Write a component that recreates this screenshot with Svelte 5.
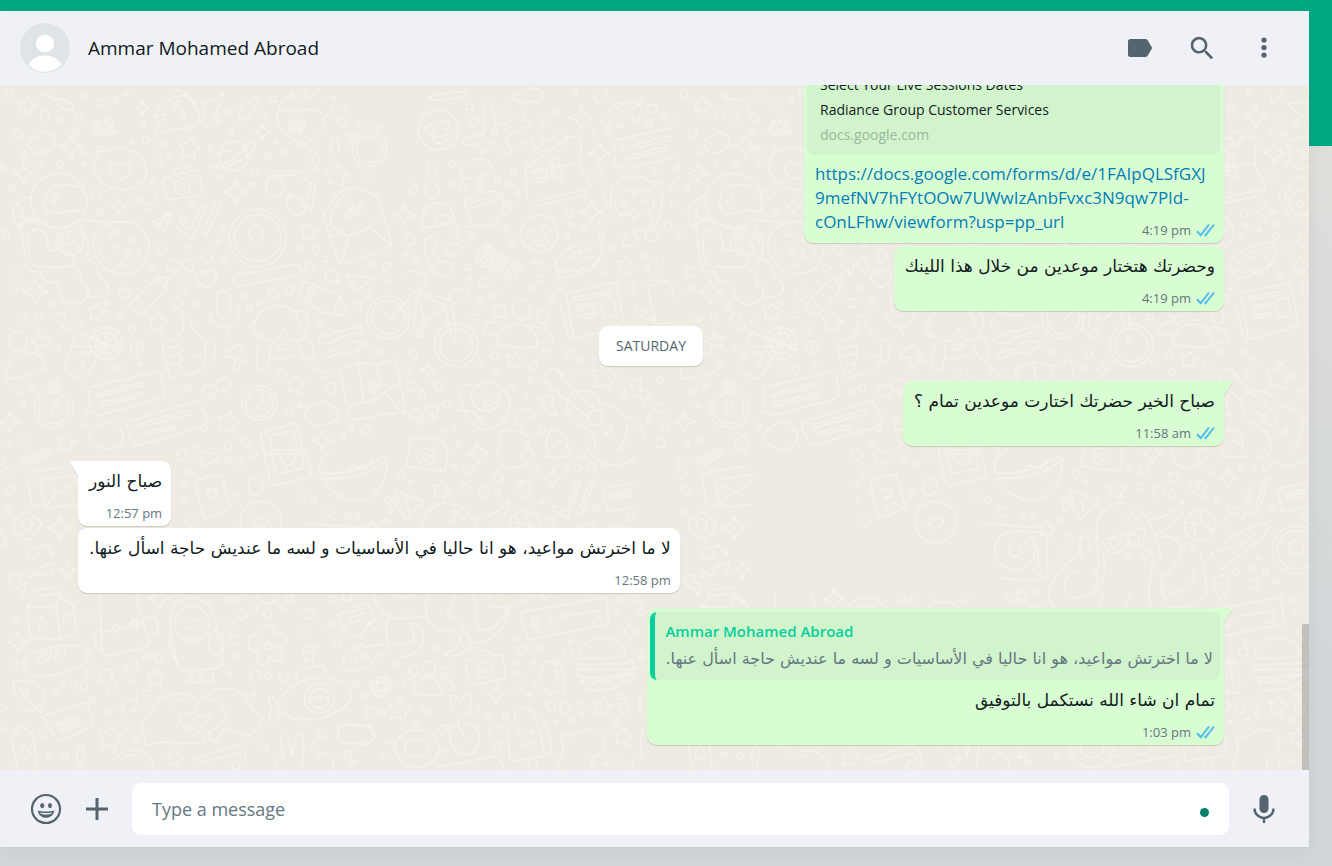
<script>
    let draft = $state('');

    const contact = 'Ammar Mohamed Abroad';
    const link = 'https://docs.google.com/forms/d/e/1FAIpQLSfGXJ9mefNV7hFYtOOw7UWwIzAnbFvxc3N9qw7PId-cOnLFhw/viewform?usp=pp_url';

    const messages = [
        { out: true, text: 'وحضرتك هتختار موعدين من خلال هذا اللينك', time: '4:19 pm' },
        { day: 'SATURDAY' },
        { out: true, tail: true, text: 'صباح الخير حضرتك اختارت موعدين تمام ؟', time: '11:58 am' },
        { tail: true, text: 'صباح النور', time: '12:57 pm' },
        { text: 'لا ما اخترتش مواعيد، هو انا حاليا في الأساسيات و لسه ما عنديش حاجة اسأل عنها.', time: '12:58 pm' },
        {
            out: true,
            tail: true,
            quote: 'لا ما اخترتش مواعيد، هو انا حاليا في الأساسيات و لسه ما عنديش حاجة اسأل عنها.',
            text: 'تمام ان شاء الله نستكمل بالتوفيق',
            time: '1:03 pm'
        }
    ];

    // wallpaper doodles, every group has its own origin inside the tile
    // dots, stars and sparks are flat lists of x, y, radius
    const doodles = [
        {
            x: 0, y: 15,
            dots: [27,12,11, 135,77,14, 257,17,8, 304,40,12, 239,84,12, 181,88,7, 230,123,8, 350,30,7, 378,10,7, 52,131,13, 72,190,7, 252,187,11, 124,220,6, 181,223,10, 250,223,6, 34,295,8, 8,230,7, 287,309,15, 301,367,8, 396,155,6, 437,149,10, 428,103,8, 484,163,7, 475,211,13, 511,199,8, 458,277,7, 467,319,7, 415,330,9, 448,351,10, 297,178,8, 576,341,7, 551,384,8, 633,174,8, 660,264,8, 686,67,10, 693,123,8, 655,95,7, 765,246,12, 756,286,8, 806,196,9, 856,189,7, 796,76,6, 822,27,8, 830,156,5, 1026,97,14, 1038,54,7, 1076,100,6, 1106,258,7, 487,477,15, 455,533,10, 565,468,7, 622,499,16, 668,415,7, 654,455,7, 674,517,7, 900,474,9, 949,481,10, 976,506,8, 930,533,15, 532,639,14, 590,638,7, 552,595,7, 376,611,18, 360,674,10, 320,637,7, 18,431,9, 46,546,14, 45,596,8, 157,645,7, 117,681,10, 69,688,8, 181,683,14, 198,712,10, 237,695,8, 176,776,8, 396,716,10, 328,836,11, 362,839,10, 736,618,8, 780,636,8, 750,655,8, 820,611,15, 866,600,13, 1101,615,8, 1073,652,13, 957,697,8, 1112,527,8, 1161,530,12, 1156,568,7, 845,852,12, 949,840,8, 976,855,10, 993,894,16, 866,964,12, 898,945,7, 527,906,7, 562,892,10, 55,903,9, 94,888,7, 69,946,7, 32,1060,9, 76,1050,11, 251,1007,7, 612,1014,8, 586,1067,7, 685,1068,11, 738,1058,12, 1098,1021,12, 1052,1018,8, 1029,1040,7, 1133,787,8, 185,440,6, 206,428,6, 232,438,6, 186,462,6, 232,468,6, 210,453,12, 210,453,42, 547,290,9, 547,290,23, 700,198,44, 768,430,22, 773,444,70, 773,444,86, 1108,178,40, 1108,178,52, 934,206,8, 1165,682,50, 1165,682,64, 318,760,32, 318,760,48, 412,773,19, 412,773,6, 778,938,40, 778,938,52, 162,955,46, 162,955,58, 162,889,18, 162,889,8, 1120,889,6, 244,787,6, 262,797,6, 249,820,6],
            stars: [80,48,28, 568,177,34, 1010,257,36, 924,427,26, 290,668,30, 472,698,32, 888,885,29, 684,998,37, 200,1060,28],
            sparks: [427,55,22, 213,170,36, 70,250,30, 356,349,24, 788,125,25, 706,306,36, 105,605,38, 30,995,30, 968,1052,30],
            paths: [
                'M135 12q14 14 32 14q52 6 52 24q0 18-28 6q-24-12-32-34zM105 186q-18-6-18-26q2-18 24-22q14-20 36-8q20 10 15 30q-4 14-16 20q-22 14-41 6z',
                'M362 174q14-2 20 10q18-4 26 10q18 0 20 18q14 8 8 24q10 14-2 26q2 18-16 20q-8 16-24 10q-12 12-28 4q-16 8-28-4q-18 4-24-14q-18-2-18-20q-20-8-10-28q-10-18 6-28q2-18 22-18q8-14 26-6q8-6 22-4zM362 270q-34-20-34-38q2-18 22-14l12 10q20-16 32 0q8 20-32 42z',
                'M496 262q-10 0-8 12l10 48q2 10 12 8l90-16q10-2 8-12l-10-50q-2-10-14-10zM520 250q0-12 12-14l26-4q10 0 12 8M574 256l12-2',
                'M644 230q-26 8-8-22q20-24 52-26M744 160q34-12 16 18q-50 56-116 58q6-14 24-16q48-12 76-60',
                'M176 250a85 82 0 1 0 2 0zM165 290q-32 14-32 50q4 34 46 30q30-12 76-6q8-2 6-30q-6-32-24-42q-40-14-72-2zM156 330q10-20 18-20q6 8-12 30q-8 4-6-10zM90 320q-40 4-52 50q0 30 22 46M90 338q-24 8-28 44l44 4M60 410q14-20 44-22q8 10 16 20M60 400l20 130q10 20 40 14M145 480q-4-62-34-62q-28 4-28 36l4 50q4 28 36 26l72 2q30 0 26-28q-6-18-12-22h-60M240 390q90 10 170 6M236 404q50 60 14 110M120 532q0 40 30 46h26q-4 50 32 66q50 0 58-40q-4-20-20-18q0-40-24-54M262 508q34 6 34 56q34 8 28 42q-16 20-56 14',
                'M370 394q50 0 74 50q14 60-34 98q-50 22-94-6q-46-40-34-92q24-50 88-50zM326 436q12-14 28-12q4 10-26 18zM342 480q10-16 16-4q-4 20-16 12zM376 498q4-22 14-20q2 24-12 24zM404 502q16-6 14-28M298 470q4 24 18 38M352 524q14-6 24 2q-12 8-24-2zM386 444q10-10 14 6q-8 14-14 4z',
                'M514 365l-58 32l16 6l20 22zM512 366l-40 38M530 414l46 32l44-96l-14-6l-34 74l-34-22zM600 420l22 14l42-96l-14-4l-36 74',
                'M465 136q10-40 36-64q-20 4-38 10q18-40 60-58q36-20 58 10q18 34 20 60l-42 24q-60-4-94 18zM520 58q0-26 18-28l-8 22q22-6 16 18q20 0 4 20M560 20q30 20 44 70M520 0q50 0 80 76M610 42l62-30q-20 60-50 98q-10 0-8-12zM720 94q-16-22 12-50l42-26q14 12-18 48q-16 26-36 28z',
                'M908 166q-84-50-78-86q16-36 60-12q10-14 40-8q40-4 42 30q-6 40-64 76zM830 90q0-50 50-84q-2 20 6 22l30-28q0 20 10 24l30-24M970 90q34-30 34-70l-24 2',
                'M990 188q-14 6-4-10q6 0 8 4v-36l16-12l10 42q-8 12-8 0q4-6 8 0M944 240q-30-24-32-40q4-18 24-16q22 4 22 24zM1050 150q-14-18 8-20q12 8-8 20zM1120 120q-6-14 10-12q20 4 10 16z',
                'M806 254q16-14 64-10q50-4 52 20q-10 14-24-8l-76 0M800 280q-10 28 20 40q28-2 30-30q-4-34-34-28q-14 4-16 18zM850 290l26 24q-24 10-14 40q20 34 46 16q16-20 0-40q-24-20-40-6M908 340l28 20l10-78q-12-10-14 4l-8 46',
                'M970 378q0-10 24-40q20-40 60-46q16-6 40 8q50 20 48 40l32 118q0 12-16 18l-130 44q-10 2-14-8zM1110 410l-62 28l-54-26q-10-12 10-60q20-42 62-60M986 436h62l-24 80M1110 412l60 50M1142 360q10 0-34 52M1032 382l24-36q6 10-14 36zM1056 376l30-40q8 8-18 42z',
                'M520 510q-24 4-16 26q10 10 20 6q-6 14 4 10q20-36-8-42zM562 506q-20 6-14 24q8 10 18 6q-2 14 6 12q20-36-10-42zM620 594q-40-20-30-42q18-16 28 0q10-20 30-4q8 20-28 46zM710 556l174-32q22 2 20 22q-6 12-20 12l-168 32q-18 0-18-16q2-12 12-18zM725 572h1M749 570h1M774 566h1M800 562h1',
                'M392 640l76-74l36-6l-6 36l-66 76q-8 8-18 0l-20-20q-6-6-2-12zM404 626q26 10 34 36M468 566q24 6 28 32M650 616q4-12 20-12q18 4 20 18v40q0 20-20 20q-16 0-20-16zM630 668q6 40 44 42q36-4 42-34v-20M674 710l14 34M920 576l90 38l36 54q-6 8-14 8l-60-8l-70-40q-6-6 0-20q2-30 18-32zM940 584q-14 10-20 44M950 590q-14 10-20 44M1024 620q-22 20-20 54',
                'M974 556q4-20 24-16q20 6 18 34q-14 14-6-2q-10 4-18 4q-18-8-18-20zM1042 556q40 0 74 10l-50 40q-6-20-26-50zM54 724q26 4 26 34q-8 26-26 28q-26-10-26-40q4-20 26-22zM16 866q0-50 36-68l12 10q6-20 30-20q40 10 44 46q-20 20-120 34zM118 724l6 20l28-6l-20 18l14 18l-24-10l-12 20l-2-22l-16-8l20-10z',
                'M230 726l86 38l-64 104q-8 4-52-22q-8-4-4-14zM216 770h100l60-8M318 712l0 96M276 740l84 40M284 790l68-60M412 792l8 32M410 828l26-6',
                'M490 770q-4-20 22-18q50-20 34-68q14-16 24 4q6 40 46 64v60q-10 44-74 42q-40 20-34-14q-20-14-8-28q-14-14-10-42zM500 774q50-10 46 4q6 14-36 18M500 800q50-12 46 4q0 18-38 20M508 826q40-8 34 6q-4 14-26 16M578 802l28-6M618 752q28-10 26 30q0 40-24 40',
                'M672 800q20-30 46-34l28 46q-10 8-18-6l-22 44l-10-4l14-44zM760 716q14-70 70-70q60 0 70 60l20 30q-20 20-40 14q-20 0-30-36q-10 36-30 40q-50-10-60-38zM762 690q-30 30 14 54M880 664q60-10 40 60M780 760q-20 60 0 82q30 10 30-70M890 756q20 60 44 56q24-16-18-82M812 800q30 16 70-6M832 766q20 0 36-4q-10 20-28 20z',
                'M956 744q10-10 34-6q12-24 34-12l56-18q20 14-10 20l-50 14q-20 20-46 16q-24 4-18-14zM966 792l62-18q30-34 50-16q20-10 24 0q-4 14-22 14q-20 30-50 14l-50 18q-16 0-14-12zM1020 840l54-24l60 10l54-18l30 160l-66 4l-50 12l-54 4zM1076 820l14 110M1130 830l14 60M1044 950l80-20l70-50M1162 916l50 60M1120 912q-26-30 0-38q26 8 0 38zM1168 690l30-34',
                'M264 892l206-46q10 0 14 10l8 56q0 12-10 14l-184 50q-10 4-20-10l-22 2l14-30zM290 914l134-38q12 0 6 10l-132 34q-14 2-8-6zM300 938l122-28q10 0 6 8l-118 30q-14 0-10-10zM384 996l204-64q10 0 12 14l26 40l-24 26l-186 54q-12 0-16-10q-26-50-16-60zM418 1002l146-40q10 4 4 12l-140 36q-14 0-10-8zM430 1028l90-22q10 4 0 10l-84 20q-10 0-6-8z',
                'M630 886q-24-4-22 22q14 20 26 6q-8 20 4 16q24-40-8-44zM670 866q-24 0-22 24q14 20 26 6q-8 16 2 16q34-40-6-46zM778 900q14 20 8 36q-20 20-20 26M176 930l-6 30l-18 14l6-30zM280 1060q-30-30 14-50q40-30 58 4q30 20 6 50q-30 30-78-4zM916 990q-10-40 34-46q24-24 40 2q40 20 14 50q-60 20-88-6zM782 1030l94-30q14-4 16 10l20 80h-120zM808 1040l70-20l16 60h-76z'
            ],
            words: [[280, 140, '42', 62, -10], [862, 128, 'W', 56, 4]]
        },
        {
            x: 1200, y: 15,
            dots: [209,50,9, 220,96,14, 317,65,11, 249,186,7, 157,222,10, 155,284,7, 187,290,10, 294,270,8, 341,244,8, 332,284,6, 352,313,8, 433,94,8, 470,65,10, 243,137,8, 283,124,8, 320,113,8, 619,92,14, 584,128,8, 626,130,8, 662,105,8, 757,56,14, 747,98,9, 790,81,8, 829,73,7, 523,8,8, 597,260,12, 507,371,12, 514,406,7, 552,418,6, 601,405,7, 604,440,9, 500,440,7, 336,455,7, 320,415,9, 167,425,9, 208,418,9, 215,445,7, 30,448,16, 18,493,7, 43,515,7, 206,531,9, 208,564,7, 251,577,14, 283,614,7, 240,635,10, 225,682,10, 401,514,7, 425,528,9, 421,568,12, 393,594,7, 474,592,9, 456,625,10, 640,475,7, 612,551,7, 735,500,8, 780,512,12, 741,538,8, 824,287,10, 825,340,12, 761,245,8, 804,409,11, 692,594,12, 115,120,60, 418,430,56, 674,344,9, 736,330,9, 169,765,50, 169,765,65, 40,792,11, 25,836,7, 35,889,14, 117,889,14, 67,911,9, 141,943,11, 129,1019,8, 161,1011,7, 178,1063,8, 235,815,8, 290,845,10, 283,796,12, 399,827,12, 393,872,8, 335,888,7, 376,917,8, 427,1020,9, 522,855,10, 435,787,8, 508,790,9, 539,812,7, 587,983,22, 672,912,9, 780,868,9, 780,955,14, 749,987,8, 794,1010,11, 782,1060,14, 267,495,10, 265,466,7, 65,716,8],
            stars: [907,48,28, 675,528,28, 343,811,26, 613,862,44],
            sparks: [543,82,36, 599,190,32, 574,365,34, 14,375,32, 83,840,22],
            paths: [
                'M75 112q20-16 30 0q-2 20-18 18q-16-6-12-18zM120 98q20-12 30 2q2 16-16 20q-16-6-14-22zM98 140q26 4 46-8q0 30-24 28q-14 0-22-20zM196 142l56-10l-2-80q10-40 26-10l10 66l60-20q10-20 30-24l-8 28q40-4 10 16l-62 34l18 44q-4 20-20 8l-40-40l-70 12q-30 0-8-24z',
                'M353 178q0-14 40-24M425 152l44-8M502 142q40-6 42 6l-4 78l30 60q0 14-16 14l-160 36q-14-6-14-30l-4-70zM374 248l164-30M394 350l162-34v-20M396 142q20-12 26 2l6 20q-8 16-24 8zM470 132q20-14 28 0l4 22q-10 14-28 6zM184 250q-10-22 24-24q20-30 50-14q24 8 16 36q-50 24-84 14z',
                'M194 346q50-20 110-34l8 28q-4 50-40 66q-46 8-58-10zM194 346q-4-20 30-30q60-20 80-4M206 356q40-4 98-36M312 334q20-4 26 8q-4 30-34 30M306 354q8-10 18-6M85 212q30 20 22 36q-20 8-24-8zM38 278q-26 36 2 36q24-8-2-36zM240 272q-20 24 0 30q20-8 0-30zM96 278q26 6 20 34q-18 20-36 6q-10-34 16-40zM68 412q-10-60 40-74q50 0 58 56q-40 20-98 18zM128 404q-24-12-20-22q12-14 20-4q20-10 24 6q-4 14-24 20z',
                'M76 450q14-20 32-6q8 24-8 34q6 30 24 36q30 0 36 26q-20 30-52 8q-44-40-32-98zM158 500q-26-16-24-30q12-20 22-4q24-10 30 6q-2 12-28 28zM378 424q16-14 26 0q0 16-14 18q-14-2-12-18zM422 410q20-10 30 4q0 14-16 20q-14-6-14-24zM402 450q20 6 44-4q-4 24-20 24q-14 0-24-20z',
                'M466 520q20-50 120-64q30 16 16 44q-20 50-110 64q-26-10-26-44zM470 530q10 24 20 12l18 10l12-14l20 10l8-14l24 4l12-20l20-24M514 494q30-16 30-4q-12 24-30 14zM560 478l16-4M564 500l14 4M486 514l8 6',
                'M650 390q-30-50-10-100q30-40 80-30q60 16 66 80q0 50-34 80M634 290q-40 16-6 66M748 274q50-10 40 54M700 360q-20 20-36 18q-30-30-16-54q30-40 52-10q20-24 44-6q36 30 6 60M656 378q30-20 50 4l30-24q30 20 14 50q-20 20-50 10M680 426q-20 30-2 42q30 4 36-20q0-20-20-24M744 412q-20 30 4 42q30 0 28-22q-8-14-20-18M686 366l14 20M704 358l14 18',
                'M638 40l90-4q-4 30-14 58q-20 0-76-54zM706 92l-16-26q10-12 30-24M640 152l180-40q10 0 14 10l14 66q0 10-8 12l-164 36q-14 2-20-10l-20-4l12-30l-10-24zM670 174l136-36q12 4 4 12l-132 32q-12 2-8-8zM680 198l120-28q10 4 4 10l-118 28q-12 0-6-10z',
                'M334 24q8-14 30-18q40-20 66-2q8 24-26 30q-40 10-70-10zM590 44l36-34l-12-8M590 40l-6-30M82 24q60-20 100-20q24 4 10 12q-60 24-110 8z',
                'M18 556q20-30 64 8q-10 40-40 40l-40 50M56 610l16 88l66-50zM60 606l90 26q-6-30 10-32h40q14 10 0 24l-44 20l14 100q-10 30-14 0l-26-110M50 620l-8 90q30 20 24 34l-24-8M2 660q30 16 20 60',
                'M298 644q24 4 16 32q-16 14-30 2q-10-28 14-34zM364 630q30 4 26 36q-10 30-30 24q-30-10-20-40q6-20 24-20zM428 660q24 4 18 30q-10 18-26 8q-20-30 8-38zM250 730q0-40 50-34l12 10M292 760q10-60 70-58q50 10 50 68q-60 8-120-10zM404 710q50 0 56 46l-42 0M250 730l42 6',
                'M498 610l140-32q10 0 12 8l20 110l-30 22l-120 30zM498 616l24 130l-12 6l-28-100q0-10 14-10M520 622l112-20q6 6 0 10l-106 20zM532 650l50-10q6 6 0 10l-46 10zM534 678l54-10q4 6 0 10l-48 8zM600 632q34-14 40-6l10 50l-38 8zM742 590l62-18l44 110q-20 20-80 20zM742 590l26 100q-50 0-64-42q20 10 40 16M806 580q40-10 40 20q6 30-10 40M760 570l40 0',
                'M178 900q20-24 60-14q20-14 40-8q60 30 50 80q-20 60-80 62q-60-20-70-120zM232 886q-30 30-10 60q20 20 56 16q30-20 20-60M172 962q60-10 76 50M252 942q-4-30 46-36q4 40-46 42zM250 944l40-30M50 960q-24 0-18 20q10 14 24 4q-10 24 2 20q24-40-8-44zM94 946q-24 0-18 20q10 14 24 4q-10 24 2 20q24-40-8-44zM342 980q10-30 50-20q20 10 10 24q-30 0-34 28q-20 0-26-32z',
                'M418 924l44-8l-8 24l18 40l-46-26l12-12zM694 876l30-8l-4 34l28 2l-14 48l-10-34l-26-4zM430 862q16-30 36-26l24 30l96 96M430 862l20 28l112 90M468 838l20 16M432 880l24-8M500 950q0-50 50-48q40 0 50 40q70 10 80 50q10 60-30 88M500 950q6 40 50 60q40 20 36 70M614 1034l20-26q10 6-10 26zM680 980q50 20 50 60M300 1024q60-10 88 20l-6 30M300 1024l6 56M440 1080q-6-60 30-60q40 10 32 60M26 1056q30-20 64-8l40 4l8 30M226 1060l20 20'
            ],
            words: [[388, 282, '24', 94, -10], [218, 510, 'BFF', 82, 32]]
        },
        {
            x: 0, y: 1095,
            dots: [22,67,14, 32,120,12, 24,184,8, 6,35,10, 546,14,17, 568,70,8, 550,106,8, 551,150,8, 573,213,15, 708,131,8, 686,28,9, 720,42,10, 762,15,8, 905,140,12, 939,152,10, 985,184,15, 1046,199,8, 1072,199,8, 81,224,16, 98,310,16, 90,373,8, 47,507,8, 40,641,11, 8,775,10, 8,828,10, 128,856,11, 147,915,8, 194,920,10, 264,501,9, 265,672,11, 187,700,7, 219,707,10, 253,707,11, 170,730,8, 278,750,8, 375,655,8, 407,646,8, 439,621,8, 476,625,12, 391,687,9, 440,730,10, 320,786,8, 390,834,10, 408,870,7, 696,522,9, 683,447,8, 713,451,8, 723,494,15, 766,475,8, 803,490,12, 705,568,14, 710,617,8, 688,670,6, 765,678,15, 804,677,9, 851,682,13, 761,730,7, 870,445,10, 925,494,15, 911,547,9, 1040,440,14, 990,524,8, 1010,573,12, 1068,702,8, 1092,737,8, 1146,788,9, 1112,788,16, 963,855,8, 945,887,11, 776,874,9, 798,890,8, 348,535,9, 403,520,9, 575,520,52, 782,216,62, 958,745,30, 958,745,45, 804,588,12, 1142,710,14, 958,745,8, 958,720,3, 935,745,3, 980,745,3, 958,772,3, 636,128,14],
            stars: [330,865,38, 467,685,29, 524,925,26, 0,268,24],
            sparks: [178,234,36, 202,361,26, 55,578,32, 478,446,32],
            paths: [
                'M62 34l70-38q14 6 0 12l-66 36q-10 0-4-10zM120 0h34q0 6-6 10l-60 36M78 72q60-14 140-24M78 76l18 86q4 8 14 4l20-6M120 102q-4-10 6-12l110-16M120 102l20 72l90-10M122 100l60 30l50-40M140 170l24-38',
                'M70 186h22l4 14l18 6l10 16l-8 10l2 14l-18 8l-8 14h-22l-6-14l-18-2l-8-20l6-12l-2-12l20-6zM110 296q24-20 30 0l16 20l-4-26M120 352l42-14l-8 34q-20 0-50 4l30-34M26 380l32-6l-2 24l22 2l-8 40l-12-26l-20-4z',
                'M104 422q30-8 74-6l2 14l-76 8zM104 438l-24 32l10 94l90 4l52-24l-16-80l-40-34zM80 470l90 4l6-34l46 28M170 474l10 92M190 496l22-12q4 10-22 26zM126 500q-18 36 0 36q20-8 0-36z',
                'M300 436l6 160q0 20 20 22l100-24q20-6 20-20l-38-138M304 540q-30 0-20 30q4 30 20 26M440 500q40-8 32 46l-30 14M306 544q30 0 80-14q40-6 40-20M340 524q20 0 14 26q-14-4-14-26zM398 508q20 0 12 26q-14-4-12-26z',
                'M510 500q4-50 60-56q70 0 80 80l20 120q-20 20-134 16q-20-70-26-160zM510 560q-10 30 24 80M626 560q10-30 40-10q10 50-2 66q-30 0-38-20zM580 664q-4 20-16 30q10 10 76-2M600 662l8 30M636 656l6 36M544 520q10-12 20-2M574 512q10-12 20-2M556 530q12 16 24-2',
                'M70 640q0-20 50-40q60-20 120-12q40 20 20 46q-40 40-150 46q-34-10-40-40zM112 640l20-42q10-4 4 36q20-10 20-40q20-8 8 34q20-20 20-40q20-8 10 26M38 694q60-10 94 30q4 40-24 50l20 14q-14 0-18-8q-60 20-72-86zM52 710l60 68M64 740l20-4l-4-20',
                'M126 800l130-42q8 0 10 8l12 54q0 10-10 12l-90 44zM172 822l60-28q8 6-4 12l-52 22zM180 838l58-26q8 6-4 12l-50 22zM302 656l36 6l-4 34l20 4l-30 40l-6-40h-22zM372 784q-16 8-14-6l14-6l4-24l36 0l-6 34q-20 10-10-6M434 850q-30-30 14-50q20-60 60-66q60-14 88 20l-6 30l-50 10q-10 30 20 40q40 0 54 40q-20 10-90 4q-30-8-90 10zM604 750q30-40 80-34q60 10 70 60l34 24q-4 40-50 60q-40-20-60-30l-30 44q-30 0-20-30q40-20 50-40q0-50-70-60M608 830q-40-30-10-34q10-8 16 4q30-4-6 30zM512 770q30-30 50-14',
                'M590 90q50-14 74-16l26 90q0 10-8 14l-62 26q-8 0-10-8l-24-90zM592 92l46-20M618 122q24-10 32 8q0 16-16 16M630 172l32-12q10 4 4 10l-34 12zM766 84q26 6 20 36q-20 26-36 12q-14-40 16-48zM782 238q-30-20-24-28q14-14 24-2q14-14 24 4q0 10-24 26zM610 44q-20-30-8-40q14-10 22 8q20-10 30 2q8 20-44 32M790 0l20 90q4 20 24 14l90-20q14-4 10-14l-16-70M810 0l16 60q4 10 14 10l64-14q10-4 6-14l-6-42M866 46q-20-4-28-30M880 0q20 40-20 46M960 70q-10-50 40-70M956 68q100 10 200-50M960 70l80 0l20-24l40 10l20-30M966 84q60 90 140 60q60-40 56-120q-60 70-196 60z',
                'M744 570q4-20 34-12q0-34 24-32q24 0 20 34q30-20 40 8q0 26-30 24q30 24 10 40q-20 10-34-16q0 34-24 28q-24-10-8-40q-30 8-32-34zM804 574l4 10h10l-8 6l4 12l-10-6l-10 6l4-12l-8-6h10zM830 760q50-80 150-76q80 10 74 60q-40 70-160 66q-60-20-64-50zM830 760q-20-40-24-10l10 26q-20 40 4 44q20-20 14-44M890 690q-6-30 10-34l70-8q10 16 8 36M918 652l-8-60q20-10 38 0q2 10-10 8l2 50M914 610l20-4M914 630l24-4',
                'M1028 640q10-40 50-50l6-8l12 8l60-6q20 8 0 26l-30 12q-20 50-90 38zM1078 592q-20 40-4 64M1090 610q24 10 20 20q-30-20-40 0M1136 684h14l6 14l14 6v14l-14 8l-6 14h-14l-6-14l-14-8v-14l14-6zM1012 494l90-36l12 26l10 20q-30 20-40 60l-36-10l-16-20zM1040 490l50-16M1044 506l50-16M1048 520l40-14M1106 526q20-20 30-10q10 20-20 20z',
                'M36 870q10-24 30-40q30 10 36 40l10 90M36 870l16 90M74 886q-26 40 0 40q30-8 0-40zM50 832q0-14 12-12q14 4 10 14M240 886q-20 40 0 74q20-40 8-74zM340 930q40-40 80-26q40 20 40 50M362 930q20-20 40-14M572 930l120-40q30-10 40 10l10 50M590 940l120-30l20 30M706 935a12 12 0 1 0 2 0M842 870q20-30 26 0l8 50q10-70 24-66q20 6 4 96M842 870l10 60q-30-20-24 10l14 20M1018 830q10-10 90 0q10 10 14 30l-20 24l-80-8q-14-10-4-46zM950 930q24-40 50 0l0 30M1020 920l16 4l0-20l18 2l-2 22l20 8l-18 8M920 220l180 14q20-30 26 0M770 440q20 30 60 16M820 450l40 34M1190 120l-10 30l20 40'
            ],
            words: []
        },
        {
            x: 1020, y: 1515,
            dots: [527,144,9, 549,181,14, 593,173,7, 528,219,8, 579,216,7, 533,250,8, 536,294,11, 569,316,5, 289,174,10, 167,224,9, 693,157,7, 685,186,13, 648,215,12, 648,215,5, 903,198,8, 836,68,8, 836,32,8, 245,355,7, 264,371,9, 446,384,8, 483,411,5, 452,428,7, 498,380,9, 470,469,12, 126,500,7, 632,351,13, 675,354,16, 725,343,9, 693,394,8, 648,397,5, 855,354,15, 845,319,9, 829,393,8, 825,508,10, 797,522,6, 726,373,6, 435,240,8, 435,240,24, 125,291,14],
            stars: [787,350,28, 178,362,36, 848,443,28],
            sparks: [868,126,28, 468,314,28],
            paths: [
                'M104 20q20 70 90 66q70-10 68 0M262 12q-20 90 40 110q60 0 60 30q-20 30-50 40q20 20 80-18M346 20q-40 40 20 90q40 60 24 76M144 160q-10-40 0-76h90M144 160q20 10 74-8q10-30-8-50q40-10 40 50q-10 40-70 50M410 40q-14 70 20 80q50 0 80-80q-10 110-110 120M190 86q4-20 20-20q20 6 20 16M330 90q-16-30 6-40',
                'M550 66l250-44l6 80l-230 46q-10 4-14-8l-20-60q0-10 8-14zM578 84q14-10 16 0l4 20q-10 14-18 0zM574 104q10 20 30 10M594 124l4 10M626 76l30 16l-22 16zM660 80l120-18M752 98l12 0l14-24M764 98l16-12',
                'M208 230q20-10 24 10q0 18-14 20q-16-10-10-30zM268 212q20 6 18 30q-10 16-22 12q-20-10-14-30q6-12 18-12zM314 232q16 6 12 20q-10 14-20 4q-14-20 8-24zM190 290q0-30 34-26M218 310q4-44 44-50q40 8 44 54q-50 4-88-4zM300 264q40 6 40 36h-34',
                'M378 222q-6-10 20-14l14-20q20-10 34-6l10 16l24-4q10 0 10 10l6 50q0 10-10 14l-90 18q-10 0-10-10zM110 262h28l4 14l14 4v24l-14 4l-6 14h-28l-6-14l-10-4v-24l12-6z',
                'M358 376q-30-20-28-60q20 0 34 20q6-24 26-26q10 30-8 66M384 346q20-6 34 2q-4 30-50 30M358 376q-10 40 20 70M356 400q-30 8-26 50q10 40 50 44q40-6 38-60q-10-40-50-30M230 420a66 56 0 1 0 2 0M230 446a36 28 0 1 0 2 0M224 420q-10-24 10-26l6 28M290 424q10-20 30-20q10 20-30 42M160 464q-20-4-22-12q14-8 30 4M288 494q24 10 30-4q-4-8-26-8M0 404q60-4 90 6q10 10 14 30l-20 24l-84-6M10 500h16l4 20l20 0M300 530l160-30q20-4 20 10l12 30',
                'M510 510l-8-90q10-20 24-24q-10-40 30-42q60 10 80 130q0 10-10 12l-100 16zM552 354q40 4 60 136M530 424l12 6l-10 6M580 418l-12 6l14 4M546 462q20 4 34-8q0 24-14 24q-14 0-20-16M566 506v34M584 504l10 36',
                'M716 206q10-60 70-62q60 0 72 50q4 10-140 12zM708 218q10 14 30 8l140-8q0-10-10-12M710 238l160 0q20-10 20-2l-30 16q-100 20-150 4zM724 270l14 24q10 10 50 6q60-4 96-50l-60 14l-14 14l-30-10l-20 12zM746 172h1M768 184h1M788 162h1M802 178h1M820 164h1',
                'M578 284q30-30 30-60q20-20 50-4q20 20 16 90l-46-6zM616 304q10 20 22 4M650 240q10 20 4 34q-10-6-4-34zM664 540q-20-20 2-44q8-30-4-60q40 10 50-10q60-20 84 20q0 50-40 54v40M875 540q0-40 30-42q-10-30 4-80M930 300a44 44 0 0 0-10 80M870 14q20 8 24 0M868 40q20-14 40 0l-10 36q30-10 40-20M915 250q-10-8 10-14'
            ],
            words: []
        },
        {
            x: 975, y: 1065,
            dots: [229,102,10, 256,128,7, 189,181,9, 196,209,7, 387,79,7, 432,90,14, 422,143,12, 477,154,16, 520,112,15, 517,161,9, 630,92,8, 651,184,7, 677,243,8, 725,87,8, 760,84,9, 800,81,12, 774,48,8, 592,134,7, 208,295,9, 198,339,12, 183,242,6, 565,320,13, 600,257,46, 433,352,7, 452,338,7, 460,368,6, 383,238,7, 413,233,7, 395,215,6, 776,352,7, 759,387,9, 797,398,9, 708,397,9, 760,432,15, 827,423,8, 889,322,22, 889,330,58, 889,330,72, 882,482,9, 65,464,15, 28,477,8, 109,454,7, 304,50,9, 304,50,25, 607,43,18, 662,436,10, 816,205,9, 45,330,20, 45,330,60, 115,392,12, 917,233,10],
            stars: [348,150,30, 140,268,28],
            sparks: [458,40,32, 684,114,28],
            paths: [
                'M208 150l88 34q4 10-20 14l-10 16l-24 28zM250 214l-4-34M254 20l-10 60l116 14l10-70M520 20q-14 60 40 64q50-10 44-20M660 50l40-50q40 20 40 50zM686 50q10 14 24 0M790 20q20 60 80 56q60-10 60-30',
                'M290 300q-10-90 60-110q70-4 100 60q30 60 32 110M306 300l124-36q10 20-4 50q-30 20-46-10q0 34-40 36q-20 0-34-40zM330 300q20-14 30 4q-2 20-20 22q-10-6-10-26zM384 288q20-14 34 4q-4 20-20 20q-12-4-14-24zM450 240q60-10 102-56q0 60-92 106M290 250q10 140 0 170M310 340q10 80-14 110M250 350q-20-40 0-66q20 10 20 50M240 290q10 50-40 80q-80 80-40 130M240 390q-60 20-40 70q40 30 86-10q20-40-10-60M480 290q80 0 60 60q-30 50-56 60q0 40 40 50q60-10 60-80M600 340q20 60 20 120q-30 50-120 40M486 410q-10 50 16 70M450 500q-10-60 10-120M380 350q-10-10 20-6q-10 20-20 6z',
                'M556 250q50-10 84 30M570 220q20 60 14 80M600 210q0 40 44 60M680 210l50 26l36-110q-6-4-14 6l-26 80l-40-16zM750 220l20 6l40-110q-10-2-14 6l-30 80M833 146l100-20M833 146l14 70l86-16M856 160l60-12q6 6-4 10l-56 12zM862 180l54-12M610 176q-40-20-38-40q10-20 30-14q24 10 8 54zM660 478q-30-40-16-60q20-20 40-6q20 30-24 66z',
                'M632 340q20-10 50-10q-10-30 0-40l90-34q30-10 36 4q-10 30-40 46l-90 74q-10 10-14 4zM680 328q60-10 84-50M690 290l10 10M710 284l8 10M732 276l8 10M0 286q60-20 140-6l4 120l-20 20l-124-4M74 304l40 20v60'
            ],
            words: []
        }
    ];

    function triples(list) {
        const result = [];
        for (let i = 0; i < list.length; i += 3) {
            result.push(list.slice(i, i + 3));
        }
        return result;
    }

    function star(x, y, r) {
        let d = '';
        for (let i = 0; i < 10; i++) {
            const a = (i * Math.PI) / 5 - 1.4;
            const len = i % 2 ? r * 0.55 : r;
            d += (i ? 'L' : 'M') + (x + Math.cos(a) * len).toFixed(1) + ' ' + (y + Math.sin(a) * len).toFixed(1);
        }
        return d + 'z';
    }

    function spark(x, y, r) {
        const s = r * 0.14;
        return `M${x} ${y - r}Q${x + s} ${y - s} ${x + r} ${y}Q${x + s} ${y + s} ${x} ${y + r}Q${x - s} ${y + s} ${x - r} ${y}Q${x - s} ${y - s} ${x} ${y - r}z`;
    }
</script>

<svelte:head>
    <title>{contact}</title>
</svelte:head>

{#snippet meta(time, out)}
    <div class="meta">
        <span>{time}</span>
        {#if out}
            <svg class="ticks" viewBox="0 0 19 14" role="img" aria-label="Read">
                <path d="M1 8.2l3.8 4L13 1.5M8.6 11.2l1 1L18 1.5" />
            </svg>
        {/if}
    </div>
{/snippet}

<div class="page">
    <main>
        <header>
            <svg class="avatar" viewBox="0 0 50 50" aria-hidden="true">
                <circle cx="25" cy="25" r="25" fill="#dfe5e7" />
                <circle cx="25" cy="20.5" r="9" fill="#fff" />
                <path d="M8.5 41.5C12 35.5 18 32.5 25 32.5s13 3 16.5 9A25 25 0 0 1 25 49a25 25 0 0 1-16.5-7.5z" fill="#fff" />
            </svg>
            <h1>{contact}</h1>
            <button aria-label="Label">
                <svg viewBox="0 0 24 24"><path d="M4.4 4.8h12c.7 0 1.3.3 1.700.9l3.700 6.300-3.700 6.200c-.4.600-1 .9-1.700.9h-12a2 2 0 0 1-2-2v-10.300a2 2 0 0 1 2-2z" /></svg>
            </button>
            <button aria-label="Search">
                <svg viewBox="0 0 24 24"><path d="M15.9 14.3H15l-.3-.3c1-1.1 1.6-2.7 1.6-4.3 0-3.7-3-6.7-6.7-6.7S3 6 3 9.7s3 6.7 6.7 6.7c1.6 0 3.2-.6 4.3-1.6l.3.3v.8l5.1 5.1 1.5-1.5-5-5.2zm-6.2 0c-2.6 0-4.6-2.1-4.6-4.6s2.1-4.6 4.6-4.6 4.6 2.1 4.6 4.6-2 4.6-4.6 4.6z" /></svg>
            </button>
            <button aria-label="Menu">
                <svg viewBox="0 0 24 24"><circle cx="12" cy="5.6" r="2.1" /><circle cx="12" cy="11.6" r="2.1" /><circle cx="12" cy="17.6" r="2.1" /></svg>
            </button>
        </header>

        <section class="chat">
            <svg class="wallpaper" aria-hidden="true">
                <defs>
                    <pattern id="doodle" width="2025" height="3600" patternUnits="userSpaceOnUse" patternTransform="scale(0.3333)">
                        {#each doodles as g}
                            <g transform="translate({g.x} {g.y})">
                                {#each triples(g.dots) as [x, y, r]}
                                    <circle cx={x} cy={y} {r} />
                                {/each}
                                {#each triples(g.stars) as [x, y, r]}
                                    <path d={star(x, y, r)} />
                                {/each}
                                {#each triples(g.sparks) as [x, y, r]}
                                    <path d={spark(x, y, r)} />
                                {/each}
                                {#each g.paths as d}
                                    <path {d} />
                                {/each}
                                {#each g.words as [x, y, word, size, turn]}
                                    <text {x} {y} font-size={size} transform="rotate({turn} {x} {y})">{word}</text>
                                {/each}
                            </g>
                        {/each}
                    </pattern>
                </defs>
                <rect width="100%" height="100%" fill="url(#doodle)" />
            </svg>

            <div class="messages">
                <article class="bubble out with-link">
                    <div class="preview">
                        <p>Select Your Live Sessions Dates</p>
                        <p>Radiance Group Customer Services</p>
                        <p class="host">docs.google.com</p>
                    </div>
                    <div class="body overlap">
                        <p class="url"><a href={link}>{link}</a></p>
                        {@render meta('4:19 pm', true)}
                    </div>
                </article>

                {#each messages as m}
                    {#if m.day}
                        <div class="day">{m.day}</div>
                    {:else}
                        <article class="bubble" class:out={m.out} class:tail={m.tail} class:quoting={m.quote}>
                            {#if m.tail}
                                <svg class="corner" viewBox="0 0 10 16" aria-hidden="true">
                                    <path class="shade" d="M0 1h7.500q1.800.2.700 1.800L0 15.500z" />
                                    <path d="M0 0h7.500q1.800.2.700 1.800L0 14.500z" />
                                </svg>
                            {/if}
                            {#if m.quote}
                                <blockquote>
                                    <cite>{contact}</cite>
                                    <p dir="rtl" lang="ar">{m.quote}</p>
                                </blockquote>
                            {/if}
                            <div class="body">
                                <p class="text" dir="rtl" lang="ar">{m.text}</p>
                                {@render meta(m.time, m.out)}
                            </div>
                        </article>
                    {/if}
                {/each}
            </div>
            <div class="thumb"></div>
        </section>

        <footer>
            <button class="emoji" aria-label="Emoji">
                <svg viewBox="0 0 32 32">
                    <circle cx="16" cy="16" r="14" fill="none" stroke="currentColor" stroke-width="2.2" />
                    <ellipse cx="12.2" cy="12.600" rx="2" ry="2.6" />
                    <ellipse cx="20" cy="12.600" rx="2" ry="2.6" />
                    <path d="M7.8 17.5c4 1.3 12.4 1.3 16.4 0-.4 4.2-3.7 7.300-8.2 7.300s-7.800-3.100-8.200-7.300z" />
                    <path d="M9.800 19.400c3.600.8 8.800.8 12.400 0-.8 1.300-2.900 2.200-6.200 2.200s-5.400-.9-6.200-2.200z" fill="#f0f1f6" />
                </svg>
            </button>
            <button class="attach" aria-label="Attach">
                <svg viewBox="0 0 30 30"><path d="M13.500 4h3v9.500h9.500v3h-9.500v9.500h-3v-9.500H4v-3h9.500z" /></svg>
            </button>
            <label class="field">
                <input type="text" placeholder="Type a message" aria-label="Type a message" bind:value={draft} />
                <span class="status"></span>
            </label>
            <button aria-label="Voice message">
                <svg viewBox="0 0 30 30">
                    <rect x="10.5" y="1" width="9" height="18" rx="4.5" />
                    <path d="M5.5 14.500a9.500 9.500 0 0 0 19 0M15 24v5" fill="none" stroke="currentColor" stroke-width="2.4" />
                </svg>
            </button>
        </footer>
    </main>
</div>

<style>
    :global(body) {
        margin: 0;
    }
    .page {
        box-sizing: border-box;
        height: 100vh;
        padding: 11px 23px 19px 0;
        background: linear-gradient(#00a884, #00a884) 0 0 / 100% 146px no-repeat, linear-gradient(#dfdedb 146px, #d2d8da 75%);
        font-family: "Open Sans", "DejaVu Sans", sans-serif;
        color: #111b21;
    }
    main {
        display: flex;
        flex-direction: column;
        height: 100%;
        box-shadow: 0 6px 18px rgba(11, 20, 26, 0.05);
    }
    h1, p, blockquote {
        margin: 0;
    }
    header, footer {
        display: flex;
        align-items: center;
        background: #f0f1f6;
        color: #54656f;
    }
    header {
        height: 74px;
        padding: 0 30px 0 20px;
        gap: 32px;
    }
    .avatar {
        width: 50px;
        height: 50px;
        margin-right: -14px;
    }
    h1 {
        flex: 1;
        font-size: 19px;
        font-weight: 400;
        color: #111b21;
    }
    button {
        display: flex;
        padding: 0;
        border: none;
        background: none;
        color: inherit;
        cursor: pointer;
    }
    button svg {
        width: 30px;
        height: 30px;
        fill: currentColor;
    }
    .emoji svg {
        width: 32px;
        height: 32px;
    }

    .chat {
        position: relative;
        flex: 1;
        min-height: 0;
        overflow: hidden;
        background: #efeae2;
    }
    .wallpaper {
        position: absolute;
        inset: 0;
        width: 100%;
        height: 100%;
    }
    pattern {
        fill: none;
        stroke: #f4f1ea;
        stroke-width: 5px;
        stroke-linejoin: round;
        stroke-linecap: round;
        font-family: "Open Sans", sans-serif;
        font-weight: 700;
    }
    .messages {
        position: relative;
        display: flex;
        flex-direction: column;
        align-items: flex-start;
        justify-content: flex-end;
        box-sizing: border-box;
        height: 100%;
        padding: 0 85px 25px 78px;
        gap: 2px;
    }
    .thumb {
        position: absolute;
        right: 0;
        bottom: 0;
        width: 7px;
        height: 146px;
        background: rgba(11, 20, 26, 0.2);
    }

    .bubble {
        position: relative;
        flex: none;
        max-width: 65%;
        border-radius: 9px;
        background: #fff;
        box-shadow: 0 1px 1px rgba(11, 20, 26, 0.16);
    }
    .out {
        align-self: flex-end;
        background: #d9fdd3;
    }
    .with-link {
        width: 420px;
        margin-bottom: 1px;
    }
    .tail {
        margin-top: 13px;
        border-top-left-radius: 0;
    }
    .tail.out {
        border-radius: 9px 0 9px 9px;
    }
    .quoting {
        padding-top: 4px;
    }
    .corner {
        position: absolute;
        top: 0;
        right: 100%;
        width: 10px;
        height: 16px;
        fill: #fff;
        transform: scaleX(-1);
    }
    .out .corner {
        right: auto;
        left: 100%;
        fill: #d9fdd3;
        transform: none;
    }
    .corner .shade {
        fill: rgba(11, 20, 26, 0.13);
    }
    .body {
        padding: 8px 9px 4px 11px;
    }
    .text {
        font-family: "DejaVu Sans", sans-serif;
        font-size: 17px;
        line-height: 24px;
    }
    .meta {
        display: flex;
        align-items: center;
        justify-content: flex-end;
        gap: 5px;
        margin-top: 11px;
        font-size: 13px;
        line-height: 18px;
        color: #667781;
    }
    .ticks {
        width: 19px;
        height: 14px;
        fill: none;
        stroke: #53bdeb;
        stroke-width: 2px;
    }
    /* the time shares the last line of the link */
    .overlap {
        display: grid;
        padding-top: 7px;
    }
    .overlap > :global(*) {
        grid-area: 1 / 1;
    }
    .overlap :global(.meta) {
        place-self: end;
    }
    .url {
        padding-bottom: 5px;
        font-size: 17px;
        line-height: 24px;
        overflow-wrap: anywhere;
    }
    a {
        color: #027eb5;
        text-decoration: none;
    }
    .preview {
        margin: 0 4px 0 3px;
        padding: 9px 13px 8px;
        border-radius: 7px;
        background: #d1f4cc;
        font-size: 14px;
        line-height: 25px;
    }
    .host {
        color: #9bb8a0;
    }
    blockquote {
        margin: 0 4px 0 3px;
        padding: 6px 7px 8px 10px;
        border-left: 5px solid #06cf9c;
        border-radius: 7px;
        background: #d1f4cc;
        line-height: 27px;
    }
    blockquote p {
        font-family: "DejaVu Sans", sans-serif;
        font-size: 16px;
        color: #667781;
    }
    cite {
        display: block;
        font-size: 15px;
        font-style: normal;
        font-weight: 600;
        color: #06cf9c;
    }
    .day {
        align-self: center;
        margin: 13px 0 0;
        padding: 0 17px;
        border-radius: 9px;
        background: #fff;
        box-shadow: 0 1px 1px rgba(11, 20, 26, 0.16);
        font-size: 14px;
        line-height: 40px;
        color: #54656f;
    }

    footer {
        padding: 13px 30px 12px;
        gap: 20px;
    }
    .field {
        display: flex;
        align-items: center;
        flex: 1;
        height: 52px;
        padding: 0 20px;
        border-radius: 9px;
        background: #fff;
    }
    input {
        flex: 1;
        min-width: 0;
        padding: 0;
        border: none;
        outline: none;
        background: none;
        font: 18px "Open Sans", sans-serif;
        color: #111b21;
    }
    input::placeholder {
        color: #667781;
        opacity: 1;
    }
    .status {
        width: 9px;
        height: 9px;
        margin-top: 6px;
        border-radius: 50%;
        background: #008069;
    }
</style>
